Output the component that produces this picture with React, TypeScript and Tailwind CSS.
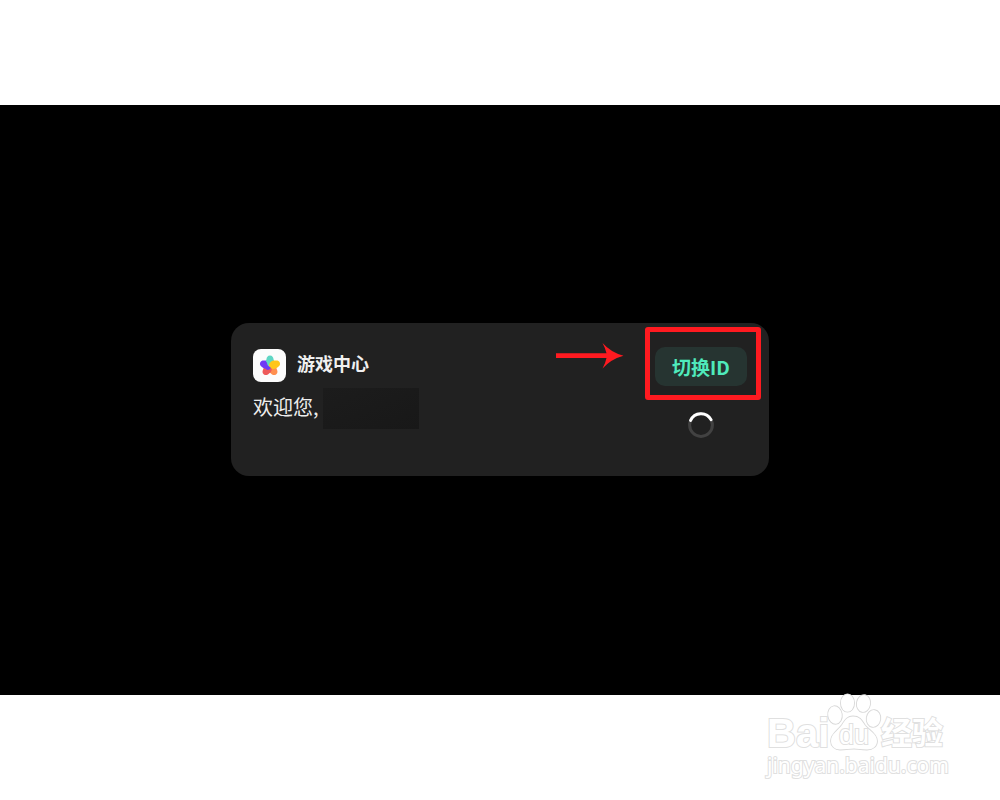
import React from 'react'

const petals = [
  { angle: 144, color: '#ff8f4f' },
  { angle: 216, color: '#ee5a5a' },
  { angle: 288, color: '#7038f5' },
  { angle: 0, color: '#5fd6c4' },
  { angle: 72, color: '#ffc61a' },
]

function GameCenterIcon() {
  return (
    <span className="flex size-[33px] items-center justify-center rounded-lg bg-[#fcfcfc]">
      <svg viewBox="-11 -11 22 22" className="size-[22px]" aria-hidden="true">
        {petals.map((petal) => (
          <path
            key={petal.angle}
            d="M0 -10.4 C2.4 -10.4 3.2 -8.6 3.6 -6.6 L4.2 -4.6 C4.2 -1.6 2.2 0.8 0 0.8 C-2.2 0.8 -4.2 -1.6 -4.2 -4.6 L-3.6 -6.6 C-3.2 -8.6 -2.4 -10.4 0 -10.4 Z"
            fill={petal.color}
            transform={`rotate(${petal.angle})`}
          />
        ))}
        <path d="M-5.2 -4.6 C-4 -5 -3 -3.6 -2.6 -1.6 C-2 0.4 -0.2 0.4 0.6 1.4 C0.8 3 -1.4 4.4 -3.6 3.8 Z" fill="#7038f5" />
      </svg>
    </span>
  )
}

function Spinner() {
  return (
    <svg viewBox="0 0 26 26" className="size-[26px]" fill="none" role="status" aria-label="加载中">
      <circle cx="13" cy="13" r="11.4" stroke="#424242" strokeWidth="3" />
      <path d="M2.6 8.4 A11.4 11.4 0 0 1 23 7.6" stroke="#ffffff" strokeWidth="3" strokeLinecap="round" />
    </svg>
  )
}

function Arrow() {
  return (
    <svg viewBox="0 0 68 26" className="h-[26px] w-[68px]" fill="#ff1a20" aria-hidden="true">
      <path d="M0 10.3 H50.5 Q49.5 5.5 46.5 0 Q55 9.5 67.5 12.7 Q55 16 46.5 25.5 Q49.5 20 50.5 15 H0 Z" />
    </svg>
  )
}

function Watermark() {
  return (
    <div className="w-[180px] text-white [-webkit-text-stroke:2px_#e0e0e0] [paint-order:stroke]">
      <div className="flex h-[57px] items-end">
        <span className="w-[60px] font-['Liberation_Sans',sans-serif] text-[40px]/[38px] font-bold">Bai</span>
        <span className="relative flex h-[57px] w-[54px] items-end justify-center">
          <svg
            viewBox="0 0 54 57"
            className="absolute inset-0 overflow-visible"
            fill="#ffffff"
            stroke="#d8d8d8"
            strokeWidth="1.8"
            aria-hidden="true"
          >
            <ellipse cx="8" cy="20" rx="6.8" ry="8.8" transform="rotate(-8 8 20)" />
            <ellipse cx="20.5" cy="8" rx="6.6" ry="8.7" />
            <ellipse cx="36.5" cy="8.5" rx="6.6" ry="8.5" transform="rotate(10 36.5 8.5)" />
            <ellipse cx="46.5" cy="23.5" rx="6.8" ry="8.4" transform="rotate(8 46.5 23.5)" />
            <path d="M26 21.5 C33 21.5 35 26 38 30.5 C42 35.5 50 39 50 46 C50 51 46 54.5 40 54.5 C34 54.5 30 53.5 27 53.5 C23 53.5 19 54.5 13 54.5 C8 54.5 4 51 4 46 C4 39 11 35.5 15 30 C18 25.5 20 21.5 26 21.5 Z" />
          </svg>
          <span className="relative font-['Liberation_Sans',sans-serif] text-[27px]/[34px]">du</span>
        </span>
        <span className="font-['Noto_Sans_CJK_SC',sans-serif] text-[31px]/[42px] font-bold">经验</span>
      </div>
      <div className="whitespace-nowrap font-['Noto_Sans',sans-serif] text-[21px]/[26px]">jingyan.baidu.com</div>
    </div>
  )
}

export default function App() {
  return (
    <div className="min-h-screen bg-white pt-[105px] font-['Noto_Sans_CJK_SC',sans-serif]">
      <main className="flex justify-center bg-black pt-[218px] pb-[219px]">
        <section className="flex w-full max-w-[538px] justify-between rounded-[18px] bg-[#212121] px-[22px]">
          <div className="pt-[26px] pb-[47px]">
            <div className="flex items-start gap-[11px]">
              <GameCenterIcon />
              <h1 className="text-[18px]/[28px] font-bold text-[#f0f0f0]">游戏中心</h1>
            </div>
            <div className="mt-[6px] flex h-[41px] text-[20px]/[38px] text-[#ededed]">
              <p className="w-[70px] whitespace-nowrap">欢迎您,</p>
              <span className="h-full w-24 bg-linear-to-br from-[#1c1c1c] to-[#181818]" />
            </div>
          </div>

          <div className="flex flex-col items-center pt-6">
            <div className="relative">
              <button
                type="button"
                className="block h-[39px] w-[92px] rounded-[10px] bg-[#263431] text-[19px]/[38px] font-bold text-[#4feabc]"
              >
                切换ID
              </button>
              {/* callout around the switch button */}
              <span className="pointer-events-none absolute -top-5 -right-3.5 -bottom-3.5 -left-2.5 rounded-[3px] border-5 border-[#ff1a20]" />
              <span className="pointer-events-none absolute -top-1 right-full mr-[31px]">
                <Arrow />
              </span>
            </div>
            <div className="mt-[26px]">
              <Spinner />
            </div>
          </div>
        </section>
      </main>

      <footer className="flex justify-end pr-[53px]">
        <Watermark />
      </footer>
    </div>
  )
}
